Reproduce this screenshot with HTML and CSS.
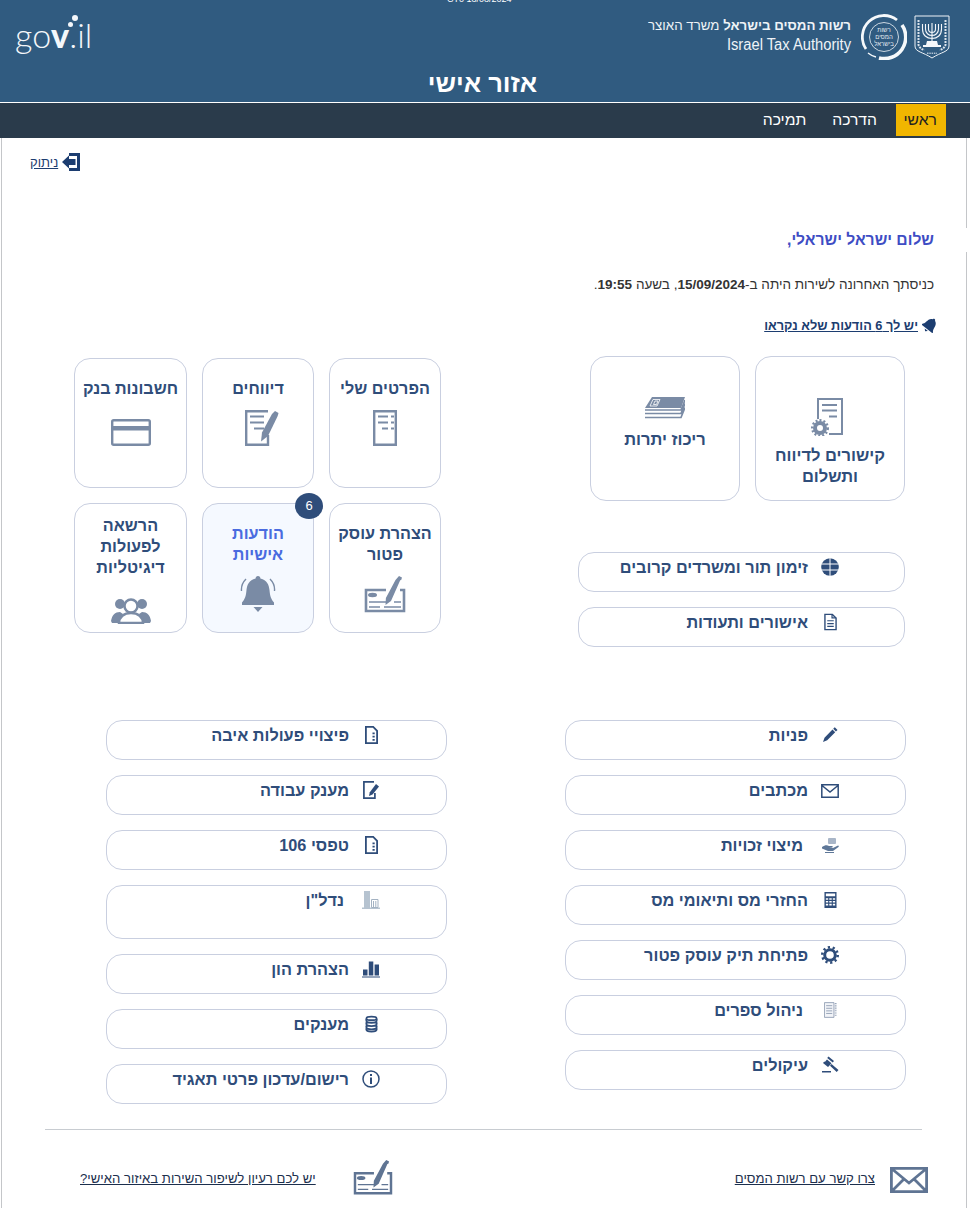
FILE: index.html
```html
<!DOCTYPE html>
<html lang="he" dir="rtl">
<head>
<meta charset="utf-8">
<title>אזור אישי</title>
<link rel="stylesheet" href="styles.css">
</head>
<body>
<svg class="defs" width="0" height="0" aria-hidden="true">
  <defs>
    <symbol id="pen-check" viewBox="0 0 42 38">
      <path fill="none" stroke="currentColor" stroke-width="2.600" d="M22 14H2v21h38V14h-4"/>
      <ellipse cx="8.500" cy="19" rx="4.500" ry="2.200" fill="currentColor"/>
      <path fill="none" stroke="currentColor" stroke-width="1.400" d="M5 26h17M30 26h7M5 31h11M20 31h17"/>
      <path fill="currentColor" d="M35 0l3 1.500-.8 2.500-1 .3L27 25l-5.500 4 .4-7L31.500 4z"/>
    </symbol>
  </defs>
</svg>
<header class="top">
  <div class="stamp" dir="ltr">CT0 18/08/2024</div>
  <div class="brand-row">
    <div class="brand">
      <svg class="emblem" viewBox="0 0 36 44" aria-hidden="true">
        <path fill="none" stroke="#eef3f7" stroke-width="1" d="M1 1h34v30c0 6-8 6-17 12C9 37 1 37 1 31z"/>
        <g fill="none" stroke="#f4f7fa" stroke-width="1.100">
          <path d="M18 8v18M14.500 9v5c0 2 1.500 3.500 3.500 3.500s3.500-1.500 3.500-3.500V9M11.500 9v5c0 4 3 6.500 6.500 6.500s6.500-2.500 6.500-6.500V9M8.500 9v5c0 6 4 9.500 9.500 9.500s9.500-3.500 9.500-9.500V9"/>
        </g>
        <path fill="#f4f7fa" d="M13 26h10l1 4h3v2H9v-2h3z"/>
        <path fill="none" stroke="#dbe4ec" stroke-width="2" stroke-dasharray="2 1" d="M4.500 5v25c1 3 3 4 6 5M31.500 5v25c-1 3-3 4-6 5"/>
        <path fill="none" stroke="#eef3f7" stroke-width="1" stroke-dasharray="1.500 .8" d="M13 38.200h10"/>
      </svg>
      <div class="ita-logo">
        <svg class="ita-ring" viewBox="0 0 46 46" aria-hidden="true">
          <path fill="none" stroke="#f6f9fb" stroke-width="2.800" d="M36 6A21.500 21.500 0 0 0 5 35"/>
          <path fill="none" stroke="#f6f9fb" stroke-width="3.600" d="M41 11a21.500 21.500 0 0 1-23 33"/>
          <path fill="none" stroke="#f6f9fb" stroke-width="1.400" d="M7 39a21.500 21.500 0 0 0 8 4"/>
          <circle cx="23" cy="23" r="14.500" fill="none" stroke="#f2f6f9" stroke-width=".8"/>
        </svg>
        <span class="ita-mark">רשות<br>המסים<br>בישראל</span>
      </div>
      <div class="brand-text">
        <div class="brand-he"><b>רשות המסים בישראל</b> משרד האוצר</div>
        <div class="brand-en" dir="ltr">Israel Tax Authority</div>
      </div>
    </div>
    <div class="gov" dir="ltr">
      <span class="gov-word">go<b>v</b>.il</span>
      <i class="gov-dot gov-dot-a"></i>
      <i class="gov-dot gov-dot-b"></i>
    </div>
  </div>
  <h1 class="page-title">אזור אישי</h1>
</header>
<nav class="nav">
  <a class="nav-item nav-active">ראשי</a>
  <a class="nav-item">הדרכה</a>
  <a class="nav-item">תמיכה</a>
</nav>
<main class="page">
  <div class="logout-row">
    <a class="logout">
      <svg class="logout-icon" viewBox="0 0 18 18" aria-hidden="true">
        <path fill="#1c3d70" d="M7 0h11v18H7v-3h8V3H7z"/>
        <path fill="#1c3d70" d="M0 9l7-6.500V6h6.500v6H7v3.500z"/>
      </svg>
      <span>ניתוק</span>
    </a>
  </div>
  <div class="greet-block">
    <h2 class="greet">שלום ישראל ישראלי,</h2>
    <p class="last-visit">כניסתך האחרונה לשירות היתה ב-<b>15/09/2024</b>, בשעה <b>19:55</b>.</p>
    <a class="unread">
      <svg class="unread-icon" viewBox="0 0 16 16" aria-hidden="true">
        <g transform="rotate(38 8 8)">
          <path fill="#1c3d70" d="M8 .5c.8 0 1.300.5 1.300 1.200C12 2.500 12.700 5 13 7.500c.2 2 1 3.500 2 4.700V13H1v-.8c1-1.200 1.800-2.700 2-4.700C3.300 5 4 2.500 6.700 1.700 6.700 1 7.200.5 8 .5zM6 14h4l-2 2z"/>
        </g>
      </svg>
      <span>יש לך 6 הודעות שלא נקראו</span>
    </a>
  </div>

  <section class="dash">
    <div class="dash-start">
      <div class="feature-row">
        <a class="card card-wide">
          <svg class="ico-report" viewBox="0 0 32 38" aria-hidden="true">
            <path fill="none" stroke="#7a8ba5" stroke-width="2" d="M7 21V1h24v35H18"/>
            <path stroke="#7a8ba5" stroke-width="2.200" d="M11 7h15M11 12.500h15M18 18.500h8"/>
            <circle cx="9" cy="30" r="5" fill="none" stroke="#7a8ba5" stroke-width="4"/>
            <circle cx="9" cy="30" r="7.800" fill="none" stroke="#7a8ba5" stroke-width="2.400" stroke-dasharray="2 2"/>
          </svg>
          <span class="card-title">קישורים לדיווח ותשלום</span>
        </a>
        <a class="card card-wide card-balance">
          <svg class="ico-bills" viewBox="0 0 40 22" aria-hidden="true">
            <path fill="#7a8ba5" d="M7 0h33l-4 11H0z"/>
            <path fill="none" stroke="#fff" stroke-width=".8" d="M8 2.500h7l-3 6.500H5zM10 4h3l-1.500 3.500h-3z"/>
            <path fill="none" stroke="#7a8ba5" stroke-width="1.700" d="M0 13h36l4-10M0 16.500h36l4-10M0 20.500h36l4-10"/>
          </svg>
          <span class="card-title">ריכוז יתרות</span>
        </a>
      </div>
      <div class="pills">
        <a class="pill">
          <span class="pill-icon">
            <svg viewBox="0 0 18 18" aria-hidden="true">
              <circle cx="9" cy="9" r="8.800" fill="#2f4d7a"/>
              <path fill="none" stroke="#fff" stroke-width="1" d="M0 6h18M0 12h18M9 0v18"/>
            </svg>
          </span>
          <span>זימון תור ומשרדים קרובים</span>
        </a>
        <a class="pill">
          <span class="pill-icon">
            <svg class="ico-narrow" viewBox="0 0 14 18" aria-hidden="true">
              <path fill="none" stroke="#2f4d7a" stroke-width="1.500" d="M1 .8h8l4 4v12.400H1z"/>
              <path fill="#2f4d7a" d="M8 1h1.300v3H13v1.300H8zM3.500 7h7v1.300h-7zM3.500 10h7v1.300h-7zM3.500 13h7v1.300h-7z"/>
            </svg>
          </span>
          <span>אישורים ותעודות</span>
        </a>
      </div>
    </div>

    <div class="tiles">
      <a class="tile">
        <span class="tile-title">הפרטים שלי</span>
        <svg class="tile-ico" viewBox="0 0 24 36" aria-hidden="true">
          <path fill="none" stroke="#7a8ba5" stroke-width="2.400" d="M1.200 1.200h21.600v33.600H1.200z"/>
          <path stroke="#7a8ba5" stroke-width="2.200" fill="none" d="M5 6.500h10M18 6.500h3M5 12.500h10M18 12.500h3M9 18.500h6M18 18.500h3"/>
        </svg>
      </a>
      <a class="tile">
        <span class="tile-title">דיווחים</span>
        <svg class="tile-ico tile-ico-report" viewBox="0 0 34 36" aria-hidden="true">
          <path fill="none" stroke="#7a8ba5" stroke-width="2.400" d="M23 1.200H1.200v33.600H23V25"/>
          <path stroke="#7a8ba5" stroke-width="2.200" fill="none" d="M5 6.500h14M5 12.500h14M9 18.500h10"/>
          <path fill="#7a8ba5" d="M30 1l3.500 2-.8 3L23 26l-7 5.500 1-9L27 4z"/>
        </svg>
      </a>
      <a class="tile">
        <span class="tile-title">חשבונות בנק</span>
        <svg class="tile-ico tile-ico-bank" viewBox="0 0 40 27" aria-hidden="true">
          <rect x="1.200" y="1.200" width="37.600" height="24.600" rx="1.500" fill="none" stroke="#7a8ba5" stroke-width="2.400"/>
          <path fill="#7a8ba5" d="M1 7h38v4.500H1z"/>
        </svg>
      </a>
      <a class="tile">
        <span class="tile-title">הצהרת עוסק פטור</span>
        <svg class="tile-ico tile-ico-check" viewBox="0 0 42 38" aria-hidden="true"><use href="#pen-check"/></svg>
      </a>
      <a class="tile tile-active">
        <span class="badge">6</span>
        <span class="tile-title">הודעות אישיות</span>
        <svg class="tile-ico tile-ico-bell" viewBox="0 0 36 38" aria-hidden="true">
          <path fill="#7a8ba5" d="M18 0c1.500 0 2.400 1 2.400 2.500C27 4 29 9 29.500 14c.5 6 1.500 9 4.500 12.500V29H2v-2.500C5 23 6 20 6.500 14 7 9 9 4 15.600 2.500 15.600 1 16.500 0 18 0zM13.500 31h9L18 36z"/>
          <path fill="none" stroke="#7a8ba5" stroke-width="1.400" d="M6 3C3 6 1 10 1.500 15M30 3c3 3 5 7 4.500 12"/>
        </svg>
      </a>
      <a class="tile tile-tall">
        <span class="tile-title">הרשאה לפעולות דיגיטליות</span>
        <svg class="tile-ico tile-ico-people" viewBox="0 0 40 26" aria-hidden="true">
          <circle cx="9" cy="6" r="5" fill="#7a8ba5"/>
          <circle cx="31" cy="6" r="5" fill="#7a8ba5"/>
          <path fill="#7a8ba5" d="M0 23c1-6 4-9 9-9l3 2-4 9H1zM40 23c-1-6-4-9-9-9l-3 2 4 9h7z"/>
          <circle cx="20" cy="8" r="6.500" fill="#fff" stroke="#7a8ba5" stroke-width="2.500"/>
          <path fill="#fff" stroke="#7a8ba5" stroke-width="2.500" d="M8 25c0-6 5-10 12-10s12 4 12 10z"/>
        </svg>
      </a>
    </div>
  </section>

  <section class="lists">
    <div class="list">
      <a class="pill"><span class="pill-icon"><svg viewBox="0 0 18 18" aria-hidden="true"><path fill="#2f4d7a" d="M13.800 1.200l2.700 2.700-1.600 1.600-2.700-2.700zM11.500 3.500l2.700 2.700-8 8L2 16l1.500-4.300z"/></svg></span><span>פניות</span></a>
      <a class="pill"><span class="pill-icon"><svg viewBox="0 0 18 14" class="ico-wide" aria-hidden="true"><path fill="none" stroke="#2f4d7a" stroke-width="1.500" d="M.8.800h16.400v12.400H.8zM1 1.500l8 6.500 8-6.500"/></svg></span><span>מכתבים</span></a>
      <a class="pill pill-faded"><span class="pill-icon"><svg viewBox="0 0 18 16" aria-hidden="true"><rect x="7" y="1" width="8" height="6" rx="1" fill="#a9b6c8"/><path fill="#5e7798" d="M1 10c3-2 5-2 7-1h3c1 0 1 1.500 0 1.500H8l4 .5 5-2.500c1 0 1 1 .5 1.500L12 14H7L1 11.500zM4 15h9v1H4z"/></svg></span><span>מיצוי זכויות</span></a>
      <a class="pill"><span class="pill-icon"><svg viewBox="0 0 14 18" class="ico-narrow" aria-hidden="true"><path fill="#2f4d7a" fill-rule="evenodd" d="M.5.500h13v17H.5zM2 2v3h10V2zM2 7v1.800h2.500V7zm3.700 0v1.800h2.600V7zm3.800 0v1.800H12V7zM2 10v1.800h2.500V10zm3.700 0v1.800h2.600V10zm3.800 0v1.800H12V10zM2 13v2h2.500v-2zm3.700 0v2h2.600v-2zm3.800 0v2H12v-2z"/></svg></span><span>החזרי מס ותיאומי מס</span></a>
      <a class="pill"><span class="pill-icon"><svg viewBox="0 0 18 18" aria-hidden="true"><circle cx="9" cy="9" r="5.300" fill="none" stroke="#2f4d7a" stroke-width="3"/><circle cx="9" cy="9" r="7.700" fill="none" stroke="#2f4d7a" stroke-width="2.600" stroke-dasharray="2.200 2.640"/></svg></span><span>פתיחת תיק עוסק פטור</span></a>
      <a class="pill pill-faded"><span class="pill-icon"><svg viewBox="0 0 15 18" class="ico-narrow" aria-hidden="true"><path fill="#f2f4f8" stroke="#8c9ab0" d="M.5.500h11v17H.5z"/><path stroke="#8c9ab0" d="M2.500 4h7M2.500 7h7M2.500 10h7M2.500 13h7"/><path stroke="#9aa7bb" stroke-width="2" stroke-dasharray="1 1" d="M13.500 1v16"/></svg></span><span>ניהול ספרים</span></a>
      <a class="pill"><span class="pill-icon"><svg viewBox="0 0 18 18" aria-hidden="true"><path fill="#2f4d7a" d="M7.500.5l5.500 4.500-1.300 1.500-5.500-4.500zM6 3.500l4.500 3.700-2.200 2.600L3.800 6zM3.300 5.500l5 4.200-1.300 1.400-5-4.200zM10.500 8l7 6-1.800 2-6.700-6.200zM1 15h9v1.500H1z"/></svg></span><span>עיקולים</span></a>
    </div>
    <div class="list">
      <a class="pill"><span class="pill-icon"><svg viewBox="0 0 13 18" class="ico-narrow" aria-hidden="true"><path fill="none" stroke="#2f4d7a" stroke-width="1.800" d="M.9.900h7.300l3.900 3.900v12.300H.9z"/><path fill="#2f4d7a" d="M7.500 6.500h2.200v1.800H7.500zM7.500 9.800h2.200v1.800H7.500zM7.500 13h2.200v1.800H7.500z"/></svg></span><span>פיצויי פעולות איבה</span></a>
      <a class="pill"><span class="pill-icon"><svg viewBox="0 0 16 18" class="ico-pen-doc" aria-hidden="true"><path fill="none" stroke="#2f4d7a" stroke-width="1.700" d="M11 .9H.9v16.200h11V12"/><path fill="#2f4d7a" d="M13 3l3 2.500-6.500 8L6 15l.8-3.800z"/></svg></span><span>מענק עבודה</span></a>
      <a class="pill"><span class="pill-icon"><svg viewBox="0 0 13 18" class="ico-narrow" aria-hidden="true"><path fill="none" stroke="#2f4d7a" stroke-width="1.800" d="M.9.900h7.300l3.900 3.900v12.300H.9z"/><path fill="#2f4d7a" d="M7.500 6.500h2.200v1.800H7.500zM7.500 9.800h2.200v1.800H7.500zM7.500 13h2.200v1.800H7.500z"/></svg></span><span>טפסי 106</span></a>
      <a class="pill pill-faded pill-tall"><span class="pill-icon"><svg viewBox="0 0 18 18" aria-hidden="true"><path fill="#b6c3d0" d="M2 0h6v17H2zM0 16.500h18V18H0z"/><path fill="none" stroke="#a3b2c2" d="M9.500 8.500H16v8H9.500zM11.500 10v6M13.800 10v6"/></svg></span><span>נדל"ן</span></a>
      <a class="pill"><span class="pill-icon"><svg viewBox="0 0 18 17" aria-hidden="true"><path fill="#2f4d7a" d="M1 9h4.500v6H1zM6.800 1h4.500v14H6.800zM12.600 4H17v11h-4.400zM0 16h18v1H0z"/></svg></span><span>הצהרת הון</span></a>
      <a class="pill"><span class="pill-icon"><svg viewBox="0 0 14 18" class="ico-narrow" aria-hidden="true"><g fill="none" stroke="#2f4d7a" stroke-width="2"><ellipse cx="7" cy="3" rx="5.500" ry="2"/><path d="M1.500 3.500v2c0 3 11 3 11 0v-2M1.500 7v2c0 3 11 3 11 0V7M1.500 10.500v2c0 3 11 3 11 0v-2M1.500 13.500v1.500c0 3 11 3 11 0v-1.500"/></g></svg></span><span>מענקים</span></a>
      <a class="pill"><span class="pill-icon"><svg viewBox="0 0 18 18" aria-hidden="true"><circle cx="9" cy="9" r="8" fill="none" stroke="#2f4d7a" stroke-width="1.500"/><path fill="#2f4d7a" d="M8 7.500h2V14H8zM8 4h2v2H8z"/></svg></span><span>רישום/עדכון פרטי תאגיד</span></a>
    </div>
  </section>

  <hr class="rule">

  <footer class="foot">
    <a class="foot-link foot-contact">
      <svg class="foot-mail" viewBox="0 0 38 26" aria-hidden="true">
        <path fill="none" stroke="#5f7493" stroke-width="2.800" d="M1.400 1.400h35.200v23.200H1.400zM1.500 1.500L19 16 36.500 1.500M1.500 24.500l12-12M36.500 24.500l-12-12"/>
      </svg>
      <span>צרו קשר עם רשות המסים</span>
    </a>
    <a class="foot-link foot-idea">
      <svg class="foot-check" viewBox="0 0 42 38" aria-hidden="true"><use href="#pen-check"/></svg>
      <span>יש לכם רעיון לשיפור השירות באיזור האישי?</span>
    </a>
  </footer>
</main>
</body>
</html>
```
FILE: styles.css
```css
* { box-sizing: border-box; }
html, body { margin: 0; padding: 0; }
body {
  width: 970px;
  height: 1208px;
  overflow: hidden;
  background: #fff;
  font-family: "Liberation Sans", Arial, sans-serif;
  color: #222;
}
a { color: inherit; }
.defs { display: block; height: 0; }

.top {
  position: relative;
  height: 102px;
  background: #305b80;
  color: #fff;
  padding: 0 20px 0 15px;
}
.stamp {
  position: absolute;
  top: -6px;
  left: 447px;
  font-size: 9px;
  line-height: 11px;
  color: #fff;
}
.brand-row {
  display: flex;
  justify-content: space-between;
  align-items: flex-start;
  height: 69px;
  padding-top: 14px;
}
.brand { display: flex; align-items: flex-start; }
.emblem { width: 36px; height: 44px; margin-left: 7px; margin-top: 1px; }
.ita-logo { position: relative; width: 46px; height: 46px; margin-left: 10px; }
.ita-ring { display: block; width: 46px; height: 46px; }
.ita-mark {
  position: absolute;
  inset: 13px 0 0 0;
  text-align: center;
  font-size: 6px;
  line-height: 7px;
  color: #e6edf3;
}
.brand-text { padding-top: 3px; color: #eef3f7; }
.brand-he { font-size: 13.3px; line-height: 18px; }
.brand-en { font-size: 16px; line-height: 20px; text-align: right; transform: scaleX(.92); transform-origin: right; }
.gov { position: relative; width: 76px; height: 42px; color: #f4f7fa; }
.gov-word {
  position: absolute;
  left: 0;
  top: 1px;
  font-family: Lato, "Open Sans", sans-serif;
  font-weight: 300;
  font-size: 34px;
  line-height: 40px;
  white-space: nowrap;
}
.gov-word b { font-weight: 900; }
.gov-dot { position: absolute; border-radius: 50%; background: #f4f7fa; }
.gov-dot-a { width: 6px; height: 6px; left: 57px; top: 1px; }
.gov-dot-b { width: 5px; height: 5px; left: 53px; top: 8px; }
.page-title {
  margin: 0;
  text-align: center;
  font-size: 25.500px;
  line-height: 28px;
  font-weight: 700;
  color: #fff;
}

.nav {
  height: 35px;
  margin-top: 1px;
  padding: 1px 24px 0 0;
  background: #2a3b4b;
  display: flex;
  align-items: flex-start;
}
.nav-item {
  height: 32px;
  font-size: 15.700px;
  line-height: 32px;
  padding: 0 9px;
  margin-left: 8px;
  color: #fff;
}
.nav-active { background: #f1b600; color: #222; width: 50px; margin-left: 10px; }

.page {
  height: 1070px;
  margin: 0 3px 0 1px;
  border-left: 1px solid #c4c6c9;
  border-right: 1px solid #c4c6c9;
}
.logout-row {
  display: flex;
  justify-content: flex-end;
  padding: 15px 0 0 28px;
  height: 90px;
}
.logout { display: flex; align-items: center; gap: 4px; height: 18px; color: #1c3d70; font-size: 13px; text-decoration: underline; }
.logout-icon { width: 18px; height: 18px; }

.greet-block { padding-right: 32px; }
.greet {
  margin: 0 -35px 0 0;
  padding-right: 35px;
  background: #fff;
  font-size: 15.700px;
  line-height: 24px;
  font-weight: 700;
  color: #3e4dc4;
  position: relative;
}
.last-visit { margin: 25px 0 0; font-size: 13.500px; line-height: 16px; color: #333; }
.unread {
  display: flex;
  align-items: center;
  gap: 4px;
  margin: 23px -4px 0 0;
  height: 18px;
  font-size: 12.750px;
  font-weight: 700;
  color: #1c3d70;
}
.unread span { text-decoration: underline; }
.unread-icon { width: 16px; height: 16px; }

.dash { display: flex; justify-content: space-between; padding: 22px 61px 0 72px; }
.dash-start { width: 327px; }
.feature-row { display: flex; gap: 15px; margin-bottom: 51px; }
.card, .tile, .pill {
  border: 1px solid #c9cfe0;
  background: #fff;
  color: #2f4d7a;
  text-decoration: none;
  font-weight: 700;
}
.card {
  width: 150px;
  height: 145px;
  border-radius: 16px;
  display: flex;
  flex-direction: column;
  align-items: center;
  padding: 41px 8px 0;
  text-align: center;
}
.card-title { font-size: 16.500px; line-height: 21px; }
.ico-report { width: 32px; height: 38px; margin: 0 7px 9px 0; }
.card-balance { padding-top: 40px; }
.ico-bills { width: 40px; height: 22px; margin-bottom: 10px; }

.pills { display: flex; flex-direction: column; gap: 15px; }
.pill {
  display: flex;
  align-items: flex-start;
  height: 40px;
  border-radius: 16px;
  font-size: 16.300px;
  line-height: 18px;
  padding: 5px 63px 0 0;
}
.pills .pill { padding-right: 62px; }
.pill-icon {
  display: flex;
  justify-content: center;
  flex: none;
  width: 24px;
  margin-left: 10px;
}
.pill-faded .pill-icon { margin-left: 15px; }
.pill-icon svg { width: 18px; height: 18px; }
.pill-icon .ico-wide { height: 14px; margin-top: 3px; }
.pill-icon .ico-narrow { width: 13px; }

.tiles {
  display: grid;
  grid-template-columns: 112px 112px 113px;
  grid-auto-rows: 130px;
  gap: 15px;
  margin-top: 2px;
}
.tile {
  position: relative;
  border-radius: 16px;
  display: flex;
  flex-direction: column;
  align-items: center;
  padding: 19px 5px 0;
  text-align: center;
}
.tile-title { font-size: 16.200px; line-height: 21px; }
.tile-ico { width: 24px; height: 36px; margin-top: 11px; }
.tile-ico-report { width: 34px; margin-left: 7px; }
.tile-ico-bank { width: 40px; height: 27px; margin-top: 20px; }
.tile-ico-check { width: 42px; height: 38px; color: #7a8ba5; }
.tile-ico-bell { width: 36px; height: 38px; margin-top: 11px; }
.tile-tall { padding-top: 11px; }
.tile-ico-people { width: 40px; height: 26px; margin-top: 20px; }
.tile-active { background: #f5f9ff; color: #4a6be0; }
.badge {
  position: absolute;
  top: -11px;
  left: 92px;
  width: 28px;
  height: 26px;
  border-radius: 50%;
  background: #2f4d7a;
  color: #fff;
  font-size: 13px;
  font-weight: 400;
  line-height: 26px;
  text-align: center;
}

.lists {
  display: flex;
  justify-content: space-between;
  padding: 73px 60px 0 104px;
}
.list { width: 341px; display: flex; flex-direction: column; gap: 15px; }
.pill-tall { height: 54px; }

.rule { margin: 25px 44px 0 43px; border: 0; border-top: 1px solid #c8ccd1; }

.foot {
  display: flex;
  justify-content: space-between;
  padding: 30px 38px 0 78px;
  font-size: 13.150px;
  color: #1c2f4d;
}
.foot-link { display: flex; align-items: center; }
.foot-link span { text-decoration: underline; }
.foot-contact { gap: 15px; }
.foot-idea { gap: 37px; }
.foot-mail { width: 38px; height: 26px; margin-top: 4px; }
.foot-check { width: 40px; height: 36px; color: #5f7493; }
```
